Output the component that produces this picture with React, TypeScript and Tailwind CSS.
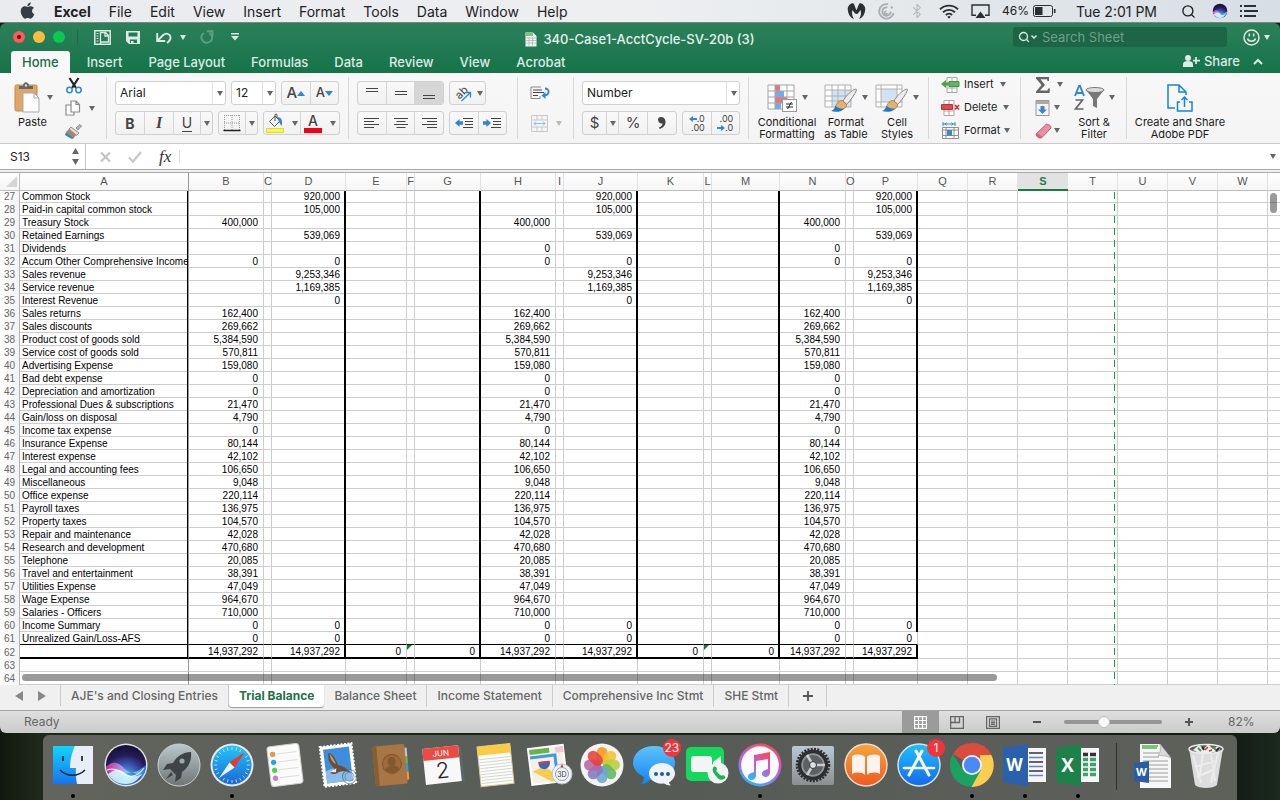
import React, { useState } from 'react';
import { Bluetooth, Search } from 'lucide-react';

type Row = {
  n: number;
  name?: string;
  debit?: string;
  credit?: string;
  // adjusted columns show a zero even where the first column is blank
  adjusted?: string;
};

const rows: Row[] = [
  { n: 27, name: 'Common Stock', credit: '920,000' },
  { n: 28, name: 'Paid-in capital common stock', credit: '105,000' },
  { n: 29, name: 'Treasury Stock', debit: '400,000' },
  { n: 30, name: 'Retained Earnings', credit: '539,069' },
  { n: 31, name: 'Dividends', adjusted: '0' },
  { n: 32, name: 'Accum Other Comprehensive Income', debit: '0', credit: '0' },
  { n: 33, name: 'Sales revenue', credit: '9,253,346' },
  { n: 34, name: 'Service revenue', credit: '1,169,385' },
  { n: 35, name: 'Interest Revenue', credit: '0' },
  { n: 36, name: 'Sales returns', debit: '162,400' },
  { n: 37, name: 'Sales discounts', debit: '269,662' },
  { n: 38, name: 'Product cost of goods sold', debit: '5,384,590' },
  { n: 39, name: 'Service cost of goods sold', debit: '570,811' },
  { n: 40, name: 'Advertising Expense', debit: '159,080' },
  { n: 41, name: 'Bad debt expense', debit: '0' },
  { n: 42, name: 'Depreciation and amortization', debit: '0' },
  { n: 43, name: 'Professional Dues & subscriptions', debit: '21,470' },
  { n: 44, name: 'Gain/loss on disposal', debit: '4,790' },
  { n: 45, name: 'Income tax expense', debit: '0' },
  { n: 46, name: 'Insurance Expense', debit: '80,144' },
  { n: 47, name: 'Interest expense', debit: '42,102' },
  { n: 48, name: 'Legal and accounting fees', debit: '106,650' },
  { n: 49, name: 'Miscellaneous', debit: '9,048' },
  { n: 50, name: 'Office expense', debit: '220,114' },
  { n: 51, name: 'Payroll taxes', debit: '136,975' },
  { n: 52, name: 'Property taxes', debit: '104,570' },
  { n: 53, name: 'Repair and maintenance', debit: '42,028' },
  { n: 54, name: 'Research and development', debit: '470,680' },
  { n: 55, name: 'Telephone', debit: '20,085' },
  { n: 56, name: 'Travel and entertainment', debit: '38,391' },
  { n: 57, name: 'Utilities Expense', debit: '47,049' },
  { n: 58, name: 'Wage Expense', debit: '964,670' },
  { n: 59, name: 'Salaries - Officers', debit: '710,000' },
  { n: 60, name: 'Income Summary', debit: '0', credit: '0' },
  { n: 61, name: 'Unrealized Gain/Loss-AFS', debit: '0', credit: '0' },
  { n: 62, debit: '14,937,292', credit: '14,937,292' },
  { n: 63 },
  { n: 64 },
];

const columns = [
  { id: 'A', width: 'w-[169px]' },
  { id: 'B', width: 'w-[75px]' },
  { id: 'C', width: 'w-[8px]' },
  { id: 'D', width: 'w-[74px]' },
  { id: 'E', width: 'w-[61px]' },
  { id: 'F', width: 'w-[8px]' },
  { id: 'G', width: 'w-[66px]' },
  { id: 'H', width: 'w-[75px]' },
  { id: 'I', width: 'w-[8px]' },
  { id: 'J', width: 'w-[74px]' },
  { id: 'K', width: 'w-[66px]' },
  { id: 'L', width: 'w-[8px]' },
  { id: 'M', width: 'w-[68px]' },
  { id: 'N', width: 'w-[66px]' },
  { id: 'O', width: 'w-[8px]' },
  { id: 'P', width: 'w-[64px]' },
  { id: 'Q', width: 'w-[50px]' },
  { id: 'R', width: 'w-[50px]' },
  { id: 'S', width: 'w-[50px]' },
  { id: 'T', width: 'w-[50px]' },
  { id: 'U', width: 'w-[50px]' },
  { id: 'V', width: 'w-[50px]' },
  { id: 'W', width: 'w-[50px]' },
];

const cellValue = (row: Row, col: string) => {
  switch (col) {
    case 'A':
      return row.name;
    case 'B':
      return row.debit;
    case 'H':
    case 'N':
      return row.adjusted ?? row.debit;
    case 'D':
    case 'J':
    case 'P':
      return row.credit;
    case 'E':
    case 'G':
    case 'K':
    case 'M':
      return row.n === 62 ? '0' : undefined;
    default:
      return undefined;
  }
};

// black rules are drawn over the grid line below so that they run unbroken
const rightBorder = (row: Row, col: string) => {
  if (col === 'A') {
    const rule = "after:absolute after:-bottom-px after:right-0 after:top-0 after:w-px after:bg-black after:content-['']";
    return `border-r border-r-[#999] ${row.n <= 62 ? rule : ''}`;
  }
  const thick = ['D', 'G', 'J', 'M', 'P'].includes(col) && row.n <= 62;
  if (thick && !(col === 'P' && row.n === 61)) {
    return "pr-1.5 after:absolute after:-bottom-px after:right-0 after:top-0 after:w-0.5 after:bg-black after:content-['']";
  }
  return 'border-r border-r-[#cdcdcd] pr-[5px]';
};

const bottomBorder = (row: Row, index: number) => {
  if (index <= 15 && row.n === 61) return 'border-b border-b-black';
  if (index <= 15 && row.n === 62) return 'border-b-2 border-b-black';
  return 'border-b border-b-[#cdcdcd]';
};

const Caret = ({ className = 'text-[#666]' }: { className?: string }) => (
  <svg width="6" height="5" viewBox="0 0 6 5" className={`shrink-0 ${className}`}>
    <path d="M0 0h6L3 5z" fill="currentColor" />
  </svg>
);

const Separator = () => <div className="my-1 w-px shrink-0 bg-[#d8d8d8]" />;

/* ---------- menu bar ---------- */

const menus = ['File', 'Edit', 'View', 'Insert', 'Format', 'Tools', 'Data', 'Window', 'Help'];

const SiriOrb = ({ size, id }: { size: number; id: string }) => (
  <svg width={size} height={size} viewBox="0 0 44 44">
    <defs>
      <radialGradient id={`${id}-bg`} cx="50%" cy="80%" r="80%">
        <stop offset="0" stopColor="#4ad0e8" />
        <stop offset=".35" stopColor="#4060c0" />
        <stop offset=".7" stopColor="#241a55" />
        <stop offset="1" stopColor="#160f35" />
      </radialGradient>
      <linearGradient id={`${id}-wave`} x1="0" x2="1">
        <stop offset="0" stopColor="#f02f9b" />
        <stop offset=".4" stopColor="#c9a0f5" />
        <stop offset=".7" stopColor="#7ee9fa" />
        <stop offset="1" stopColor="#2d7cf0" />
      </linearGradient>
    </defs>
    <circle cx="22" cy="22" r="21.500" fill="#dfe3e6" />
    <circle cx="22" cy="22" r="20" fill={`url(#${id}-bg)`} />
    <path d="M2 24c7-7 13-5 19 2s14 2 21-4c0 6-2 10-4 12-8-5-12-6-18-2S6 34 3 28z" fill={`url(#${id}-wave)`} opacity=".8" />
    <path d="M4 31c7-5 11-6 17-1s12 3 17 1c-4 6-9 10-16 10S8 38 4 31z" fill="#d9fbff" opacity=".85" />
    <path d="M3 27c8-3 14 2 19 5s12 1 18-7" fill="none" stroke="#fff" strokeWidth="1.200" opacity=".8" />
  </svg>
);

const MenuBar = () => (
  <header className="flex h-[22px] items-center justify-between bg-gradient-to-r from-[#e9ebee] via-[#edeff1] to-[#d8dfe4] pl-5 pr-[22px] text-[14px] text-[#222]">
    <nav className="flex items-center gap-[18px]">
      <svg width="15" height="17" viewBox="0 0 384 470" className="mb-0.5 mr-px" fill="#363c44">
        <path d="M319 249c0-37 17-65 50-86-19-27-47-42-85-44-36-3-75 21-89 21-15 0-49-20-76-20C63 121 4 165 4 253c0 27 5 54 14 82 13 37 59 127 107 125 25-1 43-18 76-18 32 0 48 18 76 18 49-1 91-82 103-119-65-31-61-90-61-92zM256 85c27-32 25-61 24-72-24 1-52 16-68 35-17 20-28 44-25 71 26 2 50-11 69-34z" />
      </svg>
      <a href="#" className="font-bold">
        Excel
      </a>
      {menus.map((m) => (
        <a key={m} href="#">
          {m}
        </a>
      ))}
    </nav>
    <div className="flex items-center">
      <svg width="19" height="16" viewBox="0 0 19 16" fill="#2b2e33">
        <path d="M1 8C0 4 2 1 6 0c2 2 2.500 6 3.500 7C10.500 6 11 2 13 0c4 1 6 4 5 8-.5 4-3 7-6 8 2-3 2.500-6 1.500-9-1.500 2-2.500 4-4 4s-2.500-2-4-4c-1 3-.5 6 1.500 9C4 15 1.500 12 1 8z" />
      </svg>
      <svg width="17" height="17" viewBox="0 0 17 17" className="ml-3" fill="none" stroke="#a9adb2" strokeWidth="1.800">
        <path d="M10 1.200A7.300 7.300 0 1 0 15.600 10" />
        <path d="M9.500 4.500A4.200 4.200 0 1 0 12.700 8.500" />
        <path d="M8.500 8.500a1.500 1.500 0 1 0 1 1.500M13 3.500a7 7 0 0 1 1.500 2" />
      </svg>
      <Bluetooth className="ml-3.5 h-4 w-4 text-[#b4b8bd]" strokeWidth={1.6} />
      <svg width="20" height="15" viewBox="0 0 20 15" className="ml-3.5" fill="none" stroke="#2b2e33" strokeWidth="1.900">
        <path d="M1 5.200a13 13 0 0 1 18 0M4 8.300a8.600 8.600 0 0 1 12 0M6.800 11a4.600 4.600 0 0 1 6.400 0" />
        <path d="M8.300 12.800L10 14.700l1.700-1.900a2.600 2.600 0 0 0-3.400 0z" fill="#2b2e33" stroke="none" />
      </svg>
      <svg width="19" height="15" viewBox="0 0 19 15" className="ml-3" fill="none" stroke="#2b2e33" strokeWidth="1.400">
        <path d="M5 11.300H1V1h17v10.300h-4" />
        <path d="M9.500 7.500l5 6.500h-10z" fill="#2b2e33" stroke="none" />
      </svg>
      <span className="ml-3 text-[12px]">46%</span>
      <svg width="23" height="12" viewBox="0 0 23 12" className="ml-1" fill="none" stroke="#2b2e33">
        <rect x=".5" y=".5" width="19" height="11" rx="2" />
        <rect x="2" y="2" width="7.500" height="8" fill="#2b2e33" stroke="none" />
        <path d="M21.700 4v4" strokeWidth="1.600" />
      </svg>
      <span className="ml-5">Tue 2:01 PM</span>
      <Search className="ml-6 h-[15px] w-[15px]" strokeWidth={2.2} />
      <div className="ml-4">
        <SiriOrb size={16} id="orb-small" />
      </div>
      <svg width="18" height="12" viewBox="0 0 18 12" className="ml-3" fill="#2b2e33">
        <path d="M0 0h2v2H0zM4 0h12v2H4zM0 5h2v2H0zM4 5h14v2H4zM0 10h2v2H0zM4 10h12v2H4z" />
      </svg>
    </div>
  </header>
);

/* ---------- title bar and ribbon tabs ---------- */

const ribbonTabs = ['Insert', 'Page Layout', 'Formulas', 'Data', 'Review', 'View', 'Acrobat'];

const TitleBar = () => (
  <div className="rounded-t-md bg-gradient-to-b from-[#2b805a] to-[#15734a]">
    <div className="grid h-7 grid-cols-[1fr_auto_1fr] items-center">
      <div className="flex items-center pl-[13px] text-[#dcebe3]">
        <div className="flex gap-2">
          <button aria-label="Close" className="flex h-3 w-3 items-center justify-center rounded-full bg-[#fc5b57]">
            <span className="h-1 w-1 rounded-full bg-[#5e0905]" />
          </button>
          <button aria-label="Minimize" className="h-3 w-3 rounded-full bg-[#fdbc40]" />
          <button aria-label="Zoom" className="h-3 w-3 rounded-full bg-[#0bc84f]" />
        </div>
        <span className="ml-3 h-4 w-px bg-[#22694a]" />
        <button aria-label="File templates" className="ml-4">
          <svg width="17" height="15" viewBox="0 0 17 15" fill="none" stroke="currentColor" strokeWidth="1.500">
            <path d="M.8.8h15.400v13.400H.8z" />
            <path d="M2.500 3.500h2M2.500 6h2M2.500 8.500h2M2.500 11h2" strokeWidth="1" />
            <path d="M6.500 14V2.500h5l3 3V12h-8M11 2.500v3.500h3.500" strokeWidth="1.300" />
          </svg>
        </button>
        <button aria-label="Save" className="ml-[15px]">
          <svg width="15" height="15" viewBox="0 0 15 15">
            <path d="M0 1h14v13H3l-3-3z" fill="currentColor" />
            <path d="M2.500 2.500h9v4h-9zM4 9.500h7V13H4z" fill="#247c55" />
            <path d="M5 11h2.500v3H5z" fill="currentColor" />
          </svg>
        </button>
        <button aria-label="Undo" className="ml-[15px] flex items-center gap-2">
          <svg width="16" height="13" viewBox="0 0 16 13" fill="none" stroke="currentColor" strokeWidth="1.900">
            <path d="M1.200 2v8h8" />
            <path d="M1.500 9.700L7 4.300c3-3 7-1.500 7.500 1.700.3 2.500-1.500 4.500-3.500 6" />
          </svg>
          <Caret className="text-[#dcebe3]" />
        </button>
        <button aria-label="Redo" className="ml-3.5">
          <svg width="14" height="14" viewBox="0 0 14 14" fill="none" stroke="#5e9f81" strokeWidth="1.900">
            <path d="M7 1.200h5.500v5" />
            <path d="M3.800 3A5.300 5.300 0 1 0 12 6.500L9.500 2.500" />
          </svg>
        </button>
        <button aria-label="Customize toolbar" className="ml-[17px]">
          <svg width="8" height="8" viewBox="0 0 8 8" fill="currentColor">
            <path d="M0 0h8v1.500H0zM0 3h8L4 7.500z" />
          </svg>
        </button>
      </div>
      <h1 className="flex items-center gap-1.5 pt-1 text-[13px] font-medium leading-5 text-[#e6f1eb]">
        <svg width="12" height="15" viewBox="0 0 12 15">
          <path d="M.5.5H8l3.500 3.500v10.500H.5z" fill="#f4f6f4" />
          <path d="M1 1h7v3H1z" fill="#7dbf84" />
          <path d="M1 6h10M1 8.500h10M1 11h10M4 5v9M7.500 5v9" stroke="#9db5a4" strokeWidth=".7" />
        </svg>
        340-Case1-AcctCycle-SV-20b (3)
      </h1>
      <div className="flex items-center justify-end pr-2.5 text-[#dcebe3]">
        <label className="flex h-5 w-[214px] items-center gap-px rounded-[3px] bg-[#1c6547] pl-[5px]">
          <Search className="h-3 w-3 shrink-0" strokeWidth={2.6} />
          <svg width="6" height="4" viewBox="0 0 6 4" fill="none" stroke="currentColor" strokeWidth="1.500">
            <path d="M.5.5L3 3 5.500.5" />
          </svg>
          <input
            type="text"
            aria-label="Search Sheet"
            placeholder="Search Sheet"
            className="ml-1 min-w-0 flex-1 bg-transparent text-[13px] leading-4 outline-none placeholder:text-[#6f9f89]"
          />
        </label>
        <button aria-label="Feedback" className="ml-4 flex items-center gap-1">
          <svg width="17" height="17" viewBox="0 0 17 17" fill="none" stroke="currentColor" strokeWidth="1.500">
            <circle cx="8.500" cy="8.500" r="7.500" />
            <path d="M4.500 9.500c1 3.500 7 3.500 8 0M6.300 4.500v3M10.700 4.500v3" />
          </svg>
          <Caret className="text-[#dcebe3]" />
        </button>
      </div>
    </div>
    <div className="flex h-[22px] items-stretch justify-between">
      <nav className="flex pl-[11px] text-[13px] font-medium leading-5">
        <button className="mr-1 rounded-t-[3px] bg-[#f8f8f8] px-[11px] text-[#1b6e49]">Home</button>
        {ribbonTabs.map((t) => (
          <button key={t} className="px-[13px] text-[#dcebe3]">
            {t}
          </button>
        ))}
      </nav>
      <div className="flex items-center gap-[13px] pb-0.5 pr-[17px] text-[#dcebe3]">
        <button className="flex items-center gap-1 text-[13px] font-medium leading-5">
          <svg width="17" height="12" viewBox="0 0 17 12" fill="currentColor">
            <circle cx="5" cy="3" r="3" />
            <path d="M0 12V9c0-2 2-3 5-3s5 1 5 3v3zM12.200 2h1.700v2.700H17v1.700h-3.100V9h-1.700V6.400H10V4.700h2.200z" />
          </svg>
          Share
        </button>
        <button aria-label="Collapse ribbon">
          <svg width="10" height="7" viewBox="0 0 10 7" fill="none" stroke="currentColor" strokeWidth="2">
            <path d="M1 6l4-4 4 4" />
          </svg>
        </button>
      </div>
    </div>
  </div>
);

/* ---------- ribbon ---------- */

const Combo = ({ label, value, className }: { label: string; value: string; className: string }) => (
  <label className={`relative block h-6 ${className}`}>
    <select
      aria-label={label}
      defaultValue={value}
      className="block h-6 w-full appearance-none rounded-[3px] border border-[#cfcfcf] bg-white pl-1 text-[12px] leading-5 text-[#222]"
    >
      <option>{value}</option>
    </select>
    <span className="pointer-events-none absolute inset-y-0 right-0 my-px flex w-3.5 items-center justify-center border-l border-[#e3e3e3]">
      <Caret />
    </span>
  </label>
);

const Cluster = ({ children, className = '' }: { children: React.ReactNode; className?: string }) => (
  <div className={`flex h-6 divide-x divide-[#d4d4d4] overflow-hidden rounded-[3px] border border-[#d0d0d0] bg-gradient-to-b from-[#f9f9f9] to-[#f1f1f1] ${className}`}>
    {children}
  </div>
);

const Tool = ({ label, className = 'flex-1', children }: { label: string; className?: string; children: React.ReactNode }) => (
  <button aria-label={label} className={`flex items-center justify-center ${className}`}>
    {children}
  </button>
);

const Lines = ({ d }: { d: string }) => (
  <svg width="16" height="14" viewBox="0 0 16 14" stroke="#444" strokeWidth="1.200">
    <path d={d} />
  </svg>
);

const alignIcons = [
  { label: 'Align left', d: 'M0 2.500h15M0 5.500h10M0 8.500h15M0 11.500h10' },
  { label: 'Center', d: 'M1 2.500h14M3.500 5.500h9M1 8.500h14M3.500 11.500h9' },
  { label: 'Align right', d: 'M1 2.500h15M6 5.500h10M1 8.500h15M6 11.500h10' },
];

const Indent = ({ d }: { d: string }) => (
  <svg width="18" height="12" viewBox="0 0 18 12">
    <path d="M8 1.500h10M10 4.500h8M10 7.500h8M8 10.500h10" stroke="#444" strokeWidth="1.200" />
    <path d={d} fill="#2e86d6" />
  </svg>
);

const Brush = () => (
  <>
    <path d="M31.500 6c-4 1.500-9 6-12.500 12l3.500 3.500C27 17 31 11 32.500 7c0-.7-.4-1-1-1z" fill="#ececec" stroke="#8a8a8a" />
    <path d="M18.500 17.500c-3.500 0-6 2.500-7 6.500 2 2.500 6 3 8.500 1.500 2-1 3-3 2.500-4.500z" fill="#e8b06b" stroke="#9a7238" strokeWidth=".8" />
    <path d="M11.500 23c-1 2.500-2 4-4.500 5 4 1.500 10 1 13-2-3-.3-6-1-8.500-3z" fill="#1f78d0" />
  </>
);

const BigTool = ({ lines, className, icon, caret = true }: { lines: string[]; className: string; icon: React.ReactNode; caret?: boolean }) => (
  <button className={`flex flex-col items-center pt-1.5 text-[11px] leading-3 text-[#1a1a1a] ${className}`}>
    <span className="flex h-[37px] items-center gap-1">
      {icon}
      {caret && <Caret />}
    </span>
    {lines.map((l) => (
      <span key={l} className="whitespace-nowrap">
        {l}
      </span>
    ))}
  </button>
);

const Ribbon = () => (
  <div className="flex h-[71px] border-b border-[#c9c9c9] bg-gradient-to-b from-[#f8f8f8] to-[#f4f4f4]">
    <div className="flex w-[106px] shrink-0 pl-[13px]">
      <button className="flex w-[42px] flex-col items-start pt-1.5 text-[11px] leading-3 text-[#1a1a1a]">
        <span className="flex h-[37px] items-center gap-1.5">
          <svg width="28" height="32" viewBox="0 0 28 32" className="shrink-0">
            <rect x="2" y="3" width="22" height="26" rx="1.500" fill="#dfa767" stroke="#bd8a4d" />
            <path d="M6 7V4h4c0-5 6-5 6 0h4v3z" fill="#666" />
            <circle cx="13" cy="3.500" r="1.200" fill="#ddd" />
            <path d="M10 11h11l5 5v14H10z" fill="#fdfdfd" stroke="#a9a9a9" />
            <path d="M21 11v5h5" fill="none" stroke="#a9a9a9" />
          </svg>
          <Caret />
        </span>
        <span className="pl-[5px]">Paste</span>
      </button>
      <div className="ml-2.5 flex flex-col">
        <Tool label="Cut" className="h-6 w-[17px]">
          <svg width="16" height="17" viewBox="0 0 16 17" fill="none">
            <path d="M3.500 1L10 11M12.500 1L6 11" stroke="#222" strokeWidth="2.200" />
            <circle cx="3.500" cy="13" r="2.700" stroke="#2e86d6" strokeWidth="1.500" />
            <circle cx="12.500" cy="13" r="2.700" stroke="#2e86d6" strokeWidth="1.500" />
          </svg>
        </Tool>
        <button aria-label="Copy" className="flex h-[22px] items-center gap-2">
          <svg width="16" height="16" viewBox="0 0 16 16" fill="#fff" stroke="#8c8c8c" strokeWidth="1.200">
            <path d="M1 5h5l3 3v7H1z" />
            <path d="M6 1h5l3.500 3.500V12H6zM11 1v3.500h3.500" />
          </svg>
          <Caret />
        </button>
        <Tool label="Format painter" className="h-6 w-[17px]">
          <svg width="17" height="15" viewBox="0 0 17 15">
            <path d="M11 4l4-3.500 1.500 1.500L13 6z" fill="#bbb" stroke="#777" strokeWidth=".8" />
            <path d="M6 3l8 6-2.500 2.500L4 5z" fill="#ddd" stroke="#777" strokeWidth=".8" />
            <path d="M4 5l7 6-3 4L1 8z" fill="#a8866a" />
            <path d="M1 8l7 6-1 1-7-4z" fill="#2d7fd0" />
          </svg>
        </Tool>
      </div>
    </div>
    <Separator />

    <div className="flex shrink-0 flex-col gap-1.5 px-2 pt-2">
      <div className="flex gap-[5px]">
        <Combo label="Font" value="Arial" className="w-[111px]" />
        <Combo label="Font size" value="12" className="w-[45px]" />
        <Cluster className="w-[58px]">
          <Tool label="Increase font size">
            <span className="text-[15px] font-medium text-[#444]">A</span>
            <svg width="8" height="5" viewBox="0 0 8 5">
              <path d="M0 5h8L4 0z" fill="#2e86d6" />
            </svg>
          </Tool>
          <Tool label="Decrease font size">
            <span className="text-[13px] font-medium text-[#444]">A</span>
            <svg width="8" height="5" viewBox="0 0 8 5">
              <path d="M0 0h8L4 5z" fill="#2e86d6" />
            </svg>
          </Tool>
        </Cluster>
      </div>
      <div className="flex gap-[5px] text-[14px] text-[#444]">
        <Cluster className="w-[98px]">
          <Tool label="Bold" className="w-[29px]">
            <b>B</b>
          </Tool>
          <Tool label="Italic" className="w-[29px]">
            <i className="font-['Liberation_Serif',serif] text-[16px] font-bold">I</i>
          </Tool>
          <Tool label="Underline" className="w-[27px]">
            <span className="border-b border-[#444] leading-4">U</span>
          </Tool>
          <Tool label="Underline style">
            <Caret />
          </Tool>
        </Cluster>
        <Cluster className="w-10">
          <Tool label="Borders" className="w-[27px]">
            <svg width="18" height="18" viewBox="0 0 18 18" stroke="#999" strokeDasharray="1 1" fill="none">
              <path d="M1 1.500h16M1.500 1v15M9 1v15M16.500 1v15M1 9h16" />
              <path d="M.5 16.500h17" stroke="#222" strokeDasharray="none" strokeWidth="1.500" />
            </svg>
          </Tool>
          <Tool label="Border style">
            <Caret />
          </Tool>
        </Cluster>
        <Cluster className="w-[77px]">
          <Tool label="Fill color" className="w-[37px] gap-2">
            <svg width="18" height="20" viewBox="0 0 18 20">
              <path d="M3.500 8.500l5.500-5.500 5 5-5.500 5.500z" fill="#f4f4f4" stroke="#555" />
              <path d="M9 8V2c0-1.500 2-1.500 2 0v3" fill="none" stroke="#555" />
              <path d="M11.500 4c4 0 5.500 4 4 9l-2.500-4z" fill="#2e86d6" />
              <rect x=".5" y="15.500" width="17" height="4" fill="#fbf64a" stroke="#ded93e" />
            </svg>
            <Caret />
          </Tool>
          <Tool label="Font color" className="flex-1 gap-2">
            <span className="flex w-[18px] flex-col items-center">
              <span className="text-[14px] font-medium leading-[14px]">A</span>
              <span className="h-[5px] w-full bg-[#f30014]" />
            </span>
            <Caret />
          </Tool>
        </Cluster>
      </div>
    </div>
    <Separator />

    <div className="flex shrink-0 flex-col gap-1.5 pl-2 pr-2.5 pt-2">
      <div className="flex gap-[5px]">
        <Cluster className="w-[87px]">
          <Tool label="Top align">
            <Lines d="M2 2.500h12M2 5.500h12" />
          </Tool>
          <Tool label="Middle align">
            <Lines d="M2 5.500h12M2 8.500h12" />
          </Tool>
          <Tool label="Bottom align" className="flex-1 bg-[#d6d6d6]">
            <Lines d="M2 9.500h12M2 12.500h12" />
          </Tool>
        </Cluster>
        <Cluster className="w-[37px]">
          <Tool label="Orientation" className="flex-1 gap-1">
            <svg width="20" height="19" viewBox="0 0 20 19" className="shrink-0 overflow-visible">
              <text x="3" y="13" fontSize="11" fill="#444" transform="rotate(-45 8 10)">
                ab
              </text>
              <path d="M8.500 17l8.500-8M12.500 8.500h5v5" fill="none" stroke="#2e86d6" strokeWidth="1.300" />
            </svg>
            <Caret />
          </Tool>
        </Cluster>
      </div>
      <div className="flex gap-[5px]">
        <Cluster className="w-[87px]">
          {alignIcons.map((a) => (
            <Tool key={a.label} label={a.label}>
              <Lines d={a.d} />
            </Tool>
          ))}
        </Cluster>
        <Cluster className="w-[58px]">
          <Tool label="Decrease indent">
            <Indent d="M0 6l4.500-4v2.300H8v3.400H4.500V10z" />
          </Tool>
          <Tool label="Increase indent">
            <Indent d="M8 6L3.500 2v2.300H0v3.400h3.500V10z" />
          </Tool>
        </Cluster>
      </div>
    </div>
    <Separator />

    <div className="flex w-[55px] shrink-0 flex-col gap-1.5 pl-3 pt-2">
      <Tool label="Wrap text" className="h-6 w-5">
        <svg width="20" height="14" viewBox="0 0 20 14" fill="none">
          <path d="M11 1H1v11.500h9V10" stroke="#888" />
          <path d="M3 4h9M3 6.500h11M3 9.500h5" stroke="#444" />
          <path d="M15 2.500c5 0 5 6.500-1 7" stroke="#2e86d6" strokeWidth="1.800" />
          <path d="M11.500 9.500l4-3.500v7z" fill="#2e86d6" />
        </svg>
      </Tool>
      <button aria-label="Merge cells" className="flex h-6 items-center gap-2 pl-px">
        <svg width="17" height="17" viewBox="0 0 17 17" fill="none" stroke="#c9c9c9">
          <path d="M.5.500h16v16H.5zM.5 5h16M.5 12h16M6 .5V5M11 .5V5M6 12v4.500M11 12v4.500" />
          <path d="M3 8.500h11M5 6.500l-2 2 2 2M12 6.500l2 2-2 2" stroke="#8dbde8" />
        </svg>
        <Caret className="text-[#bbb]" />
      </button>
    </div>
    <Separator />

    <div className="flex shrink-0 flex-col gap-1.5 px-2 pt-2">
      <Combo label="Number format" value="Number" className="w-[158px]" />
      <div className="flex gap-[5px] text-[#444]">
        <Cluster className="w-[95px] text-[15px]">
          <Tool label="Currency" className="w-6">
            $
          </Tool>
          <Tool label="Currency style" className="w-3">
            <Caret />
          </Tool>
          <Tool label="Percent">%</Tool>
          <Tool label="Comma style">
            <svg width="8" height="12" viewBox="0 0 8 12">
              <path d="M0 2.500C0 .8 1.500 0 3 0c3 0 4.500 2 4.500 5 0 3.500-2.500 6-6 7l-.5-1.500C3.500 9.500 4.500 8 4.500 6.500 2 7 0 5 0 2.500z" fill="#444" />
            </svg>
          </Tool>
        </Cluster>
        <Cluster className="w-[58px] text-[9px] leading-[9px]">
          <Tool label="Increase decimal">
            <span className="flex flex-col items-end">
              <span className="flex items-center">
                <svg width="8" height="6" viewBox="0 0 8 6">
                  <path d="M0 3l4-3v2h4v2H4v2z" fill="#2e86d6" />
                </svg>
                .0
              </span>
              <span>.00</span>
            </span>
          </Tool>
          <Tool label="Decrease decimal">
            <span className="flex flex-col items-end">
              <span>.00</span>
              <span className="flex items-center">
                <svg width="8" height="6" viewBox="0 0 8 6">
                  <path d="M8 3L4 0v2H0v2h4v2z" fill="#2e86d6" />
                </svg>
                .0
              </span>
            </span>
          </Tool>
        </Cluster>
      </div>
    </div>
    <Separator />

    <div className="flex w-[179px] shrink-0 gap-1 pl-2">
      <BigTool
        lines={['Conditional', 'Formatting']}
        className="w-[60px]"
        icon={
          <svg width="31" height="28" viewBox="0 0 31 28" fill="none">
            <path d="M1 1h26v24H1z" fill="#fff" />
            <path d="M8 1h5v6H8zM8 13h12v6H8z" fill="#ec7474" />
            <path d="M8 7h9v6H8zM8 19h6v6H8z" fill="#6aaeea" />
            <path d="M1 1h26v24H1zM1 7h26M1 13h26M1 19h26M8 1v24M20 1v24" stroke="#a5a5a5" />
            <rect x="15.500" y="15.500" width="14" height="12" fill="#fff" stroke="#999" />
            <path d="M19 20h7M19 23h7M24.500 18l-4 7" stroke="#222" />
          </svg>
        }
      />
      <BigTool
        lines={['Format', 'as Table']}
        className="w-[50px]"
        icon={
          <svg width="34" height="30" viewBox="0 0 34 30" fill="none">
            <path d="M1 2h26v22H1z" fill="#fff" />
            <path d="M8 7h19v17H8z" fill="#cfe3f3" />
            <path d="M1 2h26v22H1zM1 7h26M1 13h26M1 18h26M8 2v22M14 2v22M21 2v22" stroke="#b0b0b0" />
            <Brush />
          </svg>
        }
      />
      <BigTool
        lines={['Cell', 'Styles']}
        className="w-[44px]"
        icon={
          <svg width="34" height="30" viewBox="0 0 34 30" fill="none">
            <path d="M1 2h26v22H1z" fill="#fff" />
            <path d="M6 6h16v13H6z" fill="#cfe3f3" />
            <path d="M1 2h26v22H1zM1 6h26M1 19h26M6 2v22M22 2v22" stroke="#b0b0b0" />
            <Brush />
          </svg>
        }
      />
    </div>
    <Separator />

    <div className="flex w-[91px] shrink-0 flex-col items-start pl-3 text-[11px] text-[#1a1a1a]">
      <button className="flex h-[23px] items-center gap-1">
        <svg width="19" height="16" viewBox="0 0 19 16" fill="none">
          <path d="M6 .5h10v15H6zM11 .5v15M6 11h10" fill="#fff" stroke="#a9a9a9" />
          <path d="M8 4.500h10v5H8z" fill="#63b567" stroke="#3f9445" />
          <path d="M0 7l5-4v2.500h3v3H5V11z" fill="#46a34c" />
        </svg>
        Insert
        <span className="ml-0.5">
          <Caret />
        </span>
      </button>
      <button className="flex h-[23px] items-center gap-1">
        <svg width="19" height="16" viewBox="0 0 19 16" fill="none">
          <path d="M3 .5h10v15H3zM8 .5v15M3 11h10" fill="#fff" stroke="#a9a9a9" />
          <path d="M.5 4.500h11v5H.5z" fill="#df4a4f" stroke="#b8343a" />
          <path d="M14 5l4 4.500M18 5l-4 4.500" stroke="#d02f36" strokeWidth="1.600" />
        </svg>
        Delete
        <span className="ml-0.5">
          <Caret />
        </span>
      </button>
      <button className="flex h-[23px] items-center gap-1">
        <svg width="19" height="17" viewBox="0 0 19 17" fill="none">
          <path d="M2 2h12M2 0v4M14 0v4M5.500.5L4 2l1.500 1.500M10.500.5L12 2l-1.500 1.500" stroke="#2e86d6" />
          <path d="M1.500 5.500h16v11h-16zM1.500 8h16M1.500 13.500h16M5 5.500v11M13 5.500v11" fill="#fff" stroke="#8d8d8d" />
          <path d="M6 8h5v5.500H6z" fill="#3c87cb" />
        </svg>
        Format
        <Caret />
      </button>
    </div>
    <Separator />

    <div className="flex w-[105px] shrink-0 pl-3.5">
      <div className="flex w-[34px] flex-col">
        <button aria-label="AutoSum" className="flex h-[23px] items-center gap-1.5">
          <svg width="16" height="16" viewBox="0 0 16 16">
            <path d="M1 0h13v4h-1.500l-.5-1.800H5.500L10 8l-5 5.500h7.500l.7-2H15L14.500 16H1v-1.500L6.500 8 1 1.500z" fill="#666" />
          </svg>
          <Caret />
        </button>
        <button aria-label="Fill" className="flex h-[23px] items-center gap-1">
          <svg width="15" height="16" viewBox="0 0 15 16">
            <path d="M1 .5h13v15H1z" fill="#f5f5f5" stroke="#999" />
            <path d="M1 1h13v3H1z" fill="#aaa" />
            <path d="M5.500 6h4v3.500H12L7.500 14 3 9.500h2.500z" fill="#3c87cb" />
          </svg>
          <Caret />
        </button>
        <button aria-label="Clear" className="flex h-[23px] items-center gap-0.5">
          <svg width="17" height="16" viewBox="0 0 17 16">
            <path d="M1 11L11 1.500c2-1 5 1 5 3.500L7 14.500C5 16 1 14 1 11z" fill="#ec8da0" stroke="#b56476" />
            <path d="M1 10.500c1.500-.5 5.500 1.500 6 4-2 1.500-6-.5-6-4z" fill="#d9607a" />
          </svg>
          <Caret />
        </button>
      </div>
      <BigTool
        lines={['Sort &', 'Filter']}
        className="w-[50px]"
        icon={
          <svg width="32" height="28" viewBox="0 0 32 28" fill="none">
            <path d="M2 12L6 2h1l4 10M3.500 9h6" stroke="#2e86d6" strokeWidth="1.900" />
            <path d="M2.500 16h7l-7 9h8" stroke="#666" strokeWidth="1.700" />
            <path d="M13 6l7 9v7l4 2v-9l7-9z" fill="#777" />
            <ellipse cx="22" cy="6" rx="9" ry="2.500" fill="#dcdcdc" stroke="#777" />
          </svg>
        }
      />
    </div>
    <Separator />

    <BigTool
      lines={['Create and Share', 'Adobe PDF']}
      className="w-[106px] shrink-0"
      caret={false}
      icon={
        <svg width="26" height="30" viewBox="0 0 26 30" fill="none" stroke="#1583e0" strokeWidth="1.500">
          <path d="M8 25H1V2h11l7 7v3M12 2v7h7" />
          <path d="M13 19h-2.500v9H25v-9h-3M17.500 24V14M14.500 17l3-3 3 3" />
        </svg>
      }
    />
  </div>
);

const FormulaBar = () => (
  <div className="flex h-[29px] items-stretch border-b border-[#aaa] bg-[#f0f0f0] pb-0.5">
    <div className="flex flex-1 items-stretch border-b border-[#aaa] bg-white">
      <div className="flex w-[86px] items-center justify-between border-r border-[#c9c9c9] pl-2.5 pr-1.5">
        <input aria-label="Name box" defaultValue="S13" className="w-14 text-[12px] leading-4 text-[#222] outline-none" />
        <svg width="7" height="17" viewBox="0 0 7 17" fill="#666">
          <path d="M3.500 0L7 6H0zM3.500 17L7 11H0z" />
        </svg>
      </div>
      <button aria-label="Cancel" className="ml-3.5">
        <svg width="11" height="12" viewBox="0 0 11 12" stroke="#c4c4c4" strokeWidth="2.200">
          <path d="M1 1.500l9 9M10 1.500l-9 9" />
        </svg>
      </button>
      <button aria-label="Enter" className="ml-[17px]">
        <svg width="14" height="12" viewBox="0 0 14 12" fill="none" stroke="#c9c9c9" strokeWidth="2.400">
          <path d="M1 6.500l4 4L13 1" />
        </svg>
      </button>
      <button aria-label="Insert function" className="ml-[17px] font-['Liberation_Serif',serif] text-[17px] italic text-[#333]">
        fx
      </button>
      <span className="my-1.5 ml-2 w-px bg-[#ddd]" />
      <input aria-label="Formula" className="ml-2 min-w-0 flex-1 text-[12px] outline-none" />
      <button aria-label="Expand formula bar" className="pr-1">
        <Caret />
      </button>
    </div>
  </div>
);

/* ---------- worksheet ---------- */

const Sheet = () => (
  <div className="relative overflow-hidden bg-white">
    <table className="w-full table-fixed border-separate border-spacing-0 font-['Liberation_Sans',Arial,sans-serif] text-[10px] leading-[11px] text-black">
      <colgroup>
        <col className="w-5" />
        {columns.map((c) => (
          <col key={c.id} className={c.width} />
        ))}
        <col />
      </colgroup>
      <thead>
        <tr className="h-[18px] bg-gradient-to-b from-white to-[#f5f5f5] text-[11px] text-[#555]">
          <th className="border-b border-r border-[#bdbdbd] p-0">
            <svg width="11" height="11" viewBox="0 0 11 11" className="ml-1.5">
              <path d="M11 0v11H0z" fill="#d5d5d5" />
            </svg>
          </th>
          {columns.map((c) => (
            <th
              key={c.id}
              className={
                c.id === 'S'
                  ? 'border-b-2 border-b-[#1b7a4c] bg-[#e2e2e2] p-0 font-bold text-[#1b7a4c]'
                  : c.id === 'A'
                    ? 'border-b border-r border-b-[#bdbdbd] border-r-[#999] p-0 font-normal'
                    : 'border-b border-r border-b-[#bdbdbd] border-r-[#e2e2e2] p-0 font-normal'
              }
            >
              {c.id}
            </th>
          ))}
          <th className="border-b border-b-[#bdbdbd] p-0" />
        </tr>
      </thead>
      <tbody>
        {rows.map((row) => {
          // row 27 is partly scrolled under the header
          const top = row.n === 27 ? 'pt-0' : 'pt-px';
          return (
            <tr key={row.n} className={row.n === 27 ? 'h-3' : row.n === 62 ? 'h-3.5' : 'h-[13px]'}>
              <th className={`border-r border-r-[#b5b5b5] bg-gradient-to-r from-white to-[#f3f3f3] pb-px pl-0 pr-1 text-right font-normal text-[#666] ${top}`}>
                {row.n}
              </th>
              {columns.map((c, i) => {
                const value = cellValue(row, c.id);
                const flagged = row.n === 62 && (c.id === 'F' || c.id === 'L');
                if (c.id === 'A') {
                  return (
                    <td key={c.id} className={`relative pb-0 pl-0.5 pr-0 ${top} ${rightBorder(row, c.id)} ${bottomBorder(row, i)}`}>
                      <div className="h-[11px] overflow-hidden whitespace-nowrap">{value}</div>
                    </td>
                  );
                }
                return (
                  <td
                    key={c.id}
                    className={`relative whitespace-nowrap pb-0 pl-0 text-right ${top} ${rightBorder(row, c.id)} ${bottomBorder(row, i)}`}
                  >
                    {value}
                    {flagged && (
                      <svg width="5" height="5" viewBox="0 0 5 5" className="absolute left-0 top-0">
                        <path d="M0 0h5L0 5z" fill="#137c33" />
                      </svg>
                    )}
                  </td>
                );
              })}
              <td className="border-b border-b-[#cdcdcd] p-0" />
            </tr>
          );
        })}
      </tbody>
    </table>
    {/* print area page break */}
    <div className="absolute bottom-0 left-[1114px] top-[19px] w-px bg-[repeating-linear-gradient(to_bottom,#12a63f_0_7px,transparent_7px_12px)]" />
    <div className="absolute bottom-1 left-[22px] h-[7px] w-[975px] rounded-full bg-black/40" />
    <div className="absolute right-[3px] top-5 h-5 w-[7px] rounded-full bg-black/40" />
  </div>
);

const sheetTabs = [
  "AJE's and Closing Entries",
  'Trial Balance',
  'Balance Sheet',
  'Income Statement',
  'Comprehensive Inc Stmt',
  'SHE Stmt',
];

const SheetTabs = () => {
  const [active, setActive] = useState('Trial Balance');

  return (
    <div className="flex h-[26px] border-b border-[#a3a3a3] bg-[#f0f0f0] text-[12px] font-medium text-[#666]">
      <div className="mb-1 flex w-[61px] items-center gap-[15px] border-r border-[#ccc] pl-[15px]">
        <button aria-label="Previous sheet">
          <svg width="8" height="10" viewBox="0 0 8 10">
            <path d="M8 0v10L0 5z" fill="#888" />
          </svg>
        </button>
        <button aria-label="Next sheet">
          <svg width="8" height="10" viewBox="0 0 8 10">
            <path d="M0 0v10l8-5z" fill="#888" />
          </svg>
        </button>
      </div>
      {sheetTabs.map((t) => (
        <button
          key={t}
          onClick={() => setActive(t)}
          className={
            t === active
              ? 'mb-[3px] whitespace-nowrap rounded-b-[3px] bg-white px-2.5 font-bold text-[#217346] shadow-[0_1px_1px_#999]'
              : 'mb-[3px] whitespace-nowrap border-r border-[#ccc] px-2.5'
          }
        >
          {t}
        </button>
      ))}
      <button aria-label="Add sheet" className="mb-[3px] flex w-[38px] items-center justify-center border-r border-[#ccc]">
        <svg width="10" height="10" viewBox="0 0 10 10" stroke="#555" strokeWidth="1.800">
          <path d="M5 0v10M0 5h10" />
        </svg>
      </button>
    </div>
  );
};

const StatusBar = () => {
  const [zoom, setZoom] = useState(40);

  return (
    <div className="flex h-[22px] items-center justify-between rounded-b-md bg-gradient-to-b from-[#dfdfdf] to-[#cbcbcb] pl-6 text-[12px] text-[#666]">
      <span>Ready</span>
      <div className="flex h-full items-center">
        <button aria-label="Normal view" className="flex h-full w-[37px] items-center justify-center bg-[#9b9b9b]">
          <svg width="13" height="13" viewBox="0 0 13 13" fill="none" stroke="#fff" strokeWidth="1.200">
            <path d="M.6.6h11.800v11.800H.6zM4.500.6v11.800M8.500.6v11.800M.6 4.500h11.800M.6 8.500h11.800" />
          </svg>
        </button>
        <button aria-label="Page layout view" className="flex w-9 justify-center">
          <svg width="14" height="13" viewBox="0 0 14 13" fill="none" stroke="#666" strokeWidth="1.300">
            <path d="M.6.6h12.800v11.800H.6zM5 .6v5.900M9.500.6v5.900H.6" />
          </svg>
        </button>
        <button aria-label="Page break view" className="flex w-9 justify-center">
          <svg width="14" height="13" viewBox="0 0 14 13" fill="none" stroke="#666" strokeWidth="1.200">
            <path d="M.6.6h12.800v11.800H.6zM3.500 2.800h7v7.500h-7zM5 5h4M5 6.700h4M5 8.300h4" />
          </svg>
        </button>
        <button aria-label="Zoom out" className="ml-[21px]">
          <svg width="10" height="10" viewBox="0 0 10 10" stroke="#555" strokeWidth="2">
            <path d="M1 5h8" />
          </svg>
        </button>
        <input
          type="range"
          aria-label="Zoom"
          value={zoom}
          onChange={(e) => setZoom(Number(e.target.value))}
          className="ml-[22px] h-3 w-[98px] appearance-none bg-transparent [&::-webkit-slider-runnable-track]:h-1 [&::-webkit-slider-runnable-track]:rounded-full [&::-webkit-slider-runnable-track]:bg-[#959595] [&::-webkit-slider-thumb]:-mt-1 [&::-webkit-slider-thumb]:h-3 [&::-webkit-slider-thumb]:w-3 [&::-webkit-slider-thumb]:appearance-none [&::-webkit-slider-thumb]:rounded-full [&::-webkit-slider-thumb]:border [&::-webkit-slider-thumb]:border-[#bbb] [&::-webkit-slider-thumb]:bg-white"
        />
        <button aria-label="Zoom in" className="ml-[22px]">
          <svg width="10" height="10" viewBox="0 0 10 10" stroke="#555" strokeWidth="2">
            <path d="M1 5h8M5 1v8" />
          </svg>
        </button>
        <span className="ml-[34px] w-[52px]">82%</span>
      </div>
    </div>
  );
};

/* ---------- dock ---------- */

const Badge = ({ children }: { children: React.ReactNode }) => (
  <span className="absolute -right-1 -top-1 flex h-[18px] min-w-[18px] items-center justify-center rounded-full bg-[#f5333b] text-[12px] text-white">
    {children}
  </span>
);

const petals = ['#f7941e', '#f2c32e', '#b9cf3b', '#5fb95f', '#6ba5d8', '#8779b9', '#b565a7', '#e8413c'];
const ticks = [0, 15, 30, 45, 60, 75, 90, 105, 120, 135, 150, 165];

const dockApps: { name: string; running?: boolean; badge?: string; art: React.ReactNode }[] = [
  {
    name: 'Finder',
    running: true,
    art: (
      <>
        <defs>
          <linearGradient id="finder" x1="0" y1="0" x2="0" y2="1">
            <stop offset="0" stopColor="#10d5fd" />
            <stop offset="1" stopColor="#1a73ec" />
          </linearGradient>
        </defs>
        <path d="M2 3h40v38H2z" fill="#e7eef7" />
        <path d="M2 3h22c-3 6-5 13-5 22h6c-.5 5 0 11 1 16H2z" fill="url(#finder)" />
        <path d="M12 13v5M31 13v5" stroke="#123" strokeWidth="1.700" />
        <path d="M9 27c7 7 18 7 25 0" fill="none" stroke="#123" strokeWidth="1.500" />
      </>
    ),
  },
  { name: 'Siri', art: <SiriOrb size={44} id="orb-dock" /> },
  {
    name: 'Launchpad',
    art: (
      <>
        <defs>
          <linearGradient id="launchpad" x1="0" y1="0" x2="0" y2="1">
            <stop offset="0" stopColor="#bac9cc" />
            <stop offset="1" stopColor="#6f7474" />
          </linearGradient>
        </defs>
        <circle cx="22" cy="22" r="21" fill="url(#launchpad)" stroke="#c9d1d3" />
        <path d="M34 9c-8 0-14 4-18 11l-6 1-4 6 7-1 6 6-1 7 6-4 1-6c6-4 10-11 9-20z" fill="#3d4347" />
        <circle cx="25" cy="18" r="2.600" fill="#9ca8ab" />
        <path d="M14 29l-5 7 7-4z" fill="#3d4347" />
      </>
    ),
  },
  {
    name: 'Safari',
    running: true,
    art: (
      <>
        <defs>
          <linearGradient id="safari" x1="0" y1="0" x2="0" y2="1">
            <stop offset="0" stopColor="#23c5f7" />
            <stop offset="1" stopColor="#1a68d6" />
          </linearGradient>
        </defs>
        <circle cx="22" cy="22" r="21.500" fill="#e8ebed" />
        <circle cx="22" cy="22" r="19.500" fill="url(#safari)" />
        {ticks.map((a) => (
          <path key={a} d="M22 4v3M22 37v3" stroke="#cfeaff" strokeWidth=".8" transform={`rotate(${a} 22 22)`} />
        ))}
        <path d="M35 9L19.500 19.500l5 5z" fill="#f0352f" />
        <path d="M9 35l10.500-15.500 5 5z" fill="#f2f2f2" />
      </>
    ),
  },
  {
    name: 'Reminders',
    art: (
      <g transform="rotate(-7 22 22)">
        <rect x="6" y="2" width="32" height="40" rx="3" fill="#fbfbfb" stroke="#cfcfcf" />
        <path d="M15 10h20M15 18h20M15 26h20M15 34h20" stroke="#ddd" />
        <circle cx="11" cy="10" r="2.700" fill="#f79433" />
        <circle cx="11" cy="18" r="2.700" fill="#1ba6ea" />
        <circle cx="11" cy="26" r="2.700" fill="#57cf4a" />
        <circle cx="11" cy="34" r="2.700" fill="#c57ce0" />
      </g>
    ),
  },
  {
    name: 'Mail',
    art: (
      <g transform="rotate(-7 22 22)">
        <rect x="6" y="2" width="32" height="40" fill="#fff" stroke="#fff" strokeWidth="2" strokeDasharray="2 1.500" />
        <rect x="9" y="5" width="26" height="34" fill="#3f8edc" />
        <path d="M9 27c8-4 18-2 26 2v10H9z" fill="#8abdee" />
        <path d="M14 9c3 0 6 5 8 13 4 1 8 4 12 9-5-2-9-3-12-2-3 2-6 2-9 0 2-1 4-2 5-4-4-4-6-10-4-16z" fill="#6d4f35" />
        <path d="M15 10c2 2 4 6 5 11-3-2-5-6-5-11z" fill="#b99b7a" />
        <path d="M13 28l7-3-1 4z" fill="#eee" />
        <circle cx="32" cy="35" r="7" fill="none" stroke="#44576b" opacity=".6" />
        <circle cx="32" cy="35" r="4.500" fill="none" stroke="#44576b" opacity=".5" />
      </g>
    ),
  },
  {
    name: 'Contacts',
    art: (
      <g transform="rotate(-5 22 22)">
        <path d="M35 6h4v9h-4z" fill="#c8c8c8" />
        <path d="M35 15h4v7h-4z" fill="#5bc24f" />
        <path d="M35 22h4v8h-4z" fill="#2b9de8" />
        <path d="M35 30h4v8h-4z" fill="#f39b2d" />
        <rect x="5" y="2" width="32" height="40" rx="2" fill="#a87545" />
        <path d="M5 4c0-1 1-2 2-2h2v40H7c-1 0-2-1-2-2z" fill="#8c5c31" />
        <circle cx="23" cy="21" r="9.500" fill="#9c6a3b" stroke="#83582d" />
        <path d="M23 14c3 0 4 2 4 5 0 2-1 3-2 4 3 1 5 2 5 4-4 4-10 4-14 0 0-2 2-3 5-4-1-1-2-2-2-4 0-3 1-5 4-5z" fill="#83582d" />
      </g>
    ),
  },
  {
    name: 'Calendar',
    art: (
      <g transform="rotate(-6 22 22)">
        <path d="M7 6h35v34H7z" fill="#5d666b" />
        <rect x="3" y="4" width="36" height="36" fill="#f8f8f8" />
        <path d="M3 4h36v12H3z" fill="#ec4a44" />
        <text x="21" y="13" fontSize="8" textAnchor="middle" fill="#fff">
          JUN
        </text>
        <text x="21" y="35" fontSize="22" fontWeight="300" textAnchor="middle" fill="#222">
          2
        </text>
      </g>
    ),
  },
  {
    name: 'Notes',
    art: (
      <g transform="rotate(-6 22 22)">
        <rect x="5" y="2" width="33" height="40" fill="#fcfcf8" stroke="#d6c9a0" />
        <path d="M5 2h33v9H5z" fill="#fbcb45" />
        <path d="M6 15h31M6 18h31M6 21h31M6 24h31M6 27h31M6 30h31M6 33h31M6 36h31M6 39h31" stroke="#d5d5d5" />
      </g>
    ),
  },
  {
    name: 'Maps',
    art: (
      <>
        <g transform="rotate(-7 20 22)">
          <rect x="3" y="4" width="35" height="36" fill="#f5f1e6" stroke="#fff" strokeWidth="2" />
          <path d="M4 5h20v5H4z" fill="#67b548" />
          <path d="M30 5h8v6h-8z" fill="#f3c6d4" />
          <path d="M4 13h25v16" fill="none" stroke="#3f9be3" strokeWidth="3" />
          <path d="M5 27l12-4 14 12v4H23z" fill="#f7cd4d" />
          <path d="M12 18h11c1 5-2 7-5.500 8-4-1-6.500-3-5.500-8z" fill="#3268c4" />
          <path d="M12 18h11v2H12z" fill="#d93b34" />
        </g>
        <circle cx="35" cy="31" r="10" fill="#f1f4f7" stroke="#b8c2cc" />
        <circle cx="35" cy="31" r="6.500" fill="none" stroke="#768aa0" strokeWidth=".8" />
        <path d="M35 21l1.500 3h-3z" fill="#e12c2c" />
        <text x="35" y="33.500" fontSize="7" textAnchor="middle" fill="#334">
          3D
        </text>
      </>
    ),
  },
  {
    name: 'Photos',
    art: (
      <>
        <circle cx="22" cy="22" r="21.500" fill="#f4f4f4" />
        {petals.map((color, i) => (
          <rect key={color} x="16.500" y="4" width="11" height="17" rx="5.500" fill={color} opacity=".88" transform={`rotate(${i * 45} 22 22)`} />
        ))}
      </>
    ),
  },
  {
    name: 'Messages',
    badge: '23',
    art: (
      <>
        <defs>
          <linearGradient id="messages" x1="0" y1="0" x2="0" y2="1">
            <stop offset="0" stopColor="#5ec4fa" />
            <stop offset="1" stopColor="#1583f4" />
          </linearGradient>
        </defs>
        <path d="M21 3c12 0 21 7 21 17s-9 17-21 17h-4c-2 2-5 4-9 4 2-2 3-4 3-7C5 31 0 26 0 20 0 10 9 3 21 3z" fill="url(#messages)" />
        <path d="M29 20c7 0 13 4.500 13 10.500 0 4-3 7-6 9 0 1 1 2 2 3-3 0-5-1-7-2-9 1-15-4-15-10S22 20 29 20z" fill="#eef3f8" />
        <circle cx="23" cy="31" r="2" fill="#1f5c9e" />
        <circle cx="29" cy="31" r="2" fill="#1f5c9e" />
        <circle cx="35" cy="31" r="2" fill="#1f5c9e" />
      </>
    ),
  },
  {
    name: 'FaceTime',
    art: (
      <>
        <rect x="0" y="4" width="38" height="34" rx="5" fill="#12d85b" />
        <rect x="5" y="13" width="21" height="16" rx="3" fill="#f4f4f4" />
        <path d="M27 19l8-6v16l-8-6z" fill="#f4f4f4" />
        <circle cx="32" cy="30" r="10.500" fill="#f3f3f3" />
        <path d="M27 25c1-2 3-2 4 1-1 2-1 2 2 5 2 2 3 2 4 1 3 1 3 3 1 4-3 2-6 0-8-3-3-3-4-6-3-8z" fill="#16b84e" />
      </>
    ),
  },
  {
    name: 'iTunes',
    running: true,
    art: (
      <>
        <defs>
          <linearGradient id="itunes" x1=".7" y1="0" x2=".3" y2="1">
            <stop offset="0" stopColor="#fb4b5e" />
            <stop offset=".5" stopColor="#c45be0" />
            <stop offset="1" stopColor="#27b8f5" />
          </linearGradient>
        </defs>
        <circle cx="22" cy="22" r="21.500" fill="url(#itunes)" />
        <circle cx="22" cy="22" r="18.800" fill="#fbfafc" />
        <path d="M16 12l16-3v20c0 7-9 6-8 1 1-3 4-3 6-4V16l-12 2v14c0 7-9 6-8 1 1-3 4-3 6-4z" fill="url(#itunes)" />
      </>
    ),
  },
  {
    name: 'System Preferences',
    art: (
      <>
        <defs>
          <linearGradient id="prefs" x1="0" y1="0" x2="0" y2="1">
            <stop offset="0" stopColor="#b7c9d3" />
            <stop offset="1" stopColor="#8c8f91" />
          </linearGradient>
        </defs>
        <rect x="1" y="3" width="42" height="39" rx="2" fill="url(#prefs)" />
        <circle cx="22" cy="22" r="16" fill="none" stroke="#2c2e30" strokeWidth="2.500" strokeDasharray="2 1.300" />
        <circle cx="22" cy="22" r="13.500" fill="#8f9599" stroke="#2c2e30" strokeWidth="3.500" />
        <circle cx="22" cy="22" r="10" fill="#5c6165" />
        <path d="M22 22H34M22 22l-6-10M22 22l-6 10" stroke="#c8ccce" strokeWidth="2.600" />
        <circle cx="22" cy="22" r="3.500" fill="#dcdedf" stroke="#333" />
      </>
    ),
  },
  {
    name: 'iBooks',
    art: (
      <>
        <defs>
          <linearGradient id="ibooks" x1="0" y1="0" x2="0" y2="1">
            <stop offset="0" stopColor="#f9a43c" />
            <stop offset="1" stopColor="#ee5a20" />
          </linearGradient>
        </defs>
        <circle cx="22" cy="22" r="21" fill="url(#ibooks)" stroke="#eadfd6" strokeWidth="1.400" />
        <path d="M21 14c-3-3-9-3-13-1v18c4-2 10-2 13 1zM23 14c3-3 9-3 13-1v18c-4-2-10-2-13 1z" fill="#fbf4ee" />
      </>
    ),
  },
  {
    name: 'App Store',
    badge: '1',
    art: (
      <>
        <defs>
          <linearGradient id="appstore" x1="0" y1="0" x2="0" y2="1">
            <stop offset="0" stopColor="#1fc0fb" />
            <stop offset="1" stopColor="#1668ec" />
          </linearGradient>
        </defs>
        <circle cx="22" cy="22" r="21" fill="url(#appstore)" stroke="#dbe6ee" strokeWidth="1.400" />
        <path d="M19 8l13 24M25 8L12 32" stroke="#f5faff" strokeWidth="3" strokeLinecap="round" />
        <path d="M7 25h30" stroke="#f5faff" strokeWidth="2.600" strokeLinecap="round" />
      </>
    ),
  },
  {
    name: 'Chrome',
    running: true,
    art: (
      <>
        <path d="M22 22L2.900 11A22 22 0 0 1 41.100 11z" fill="#dd4b3e" />
        <path d="M22 0a22 22 0 0 1 19.500 12H22z" fill="#dd4b3e" />
        <path d="M2.700 11.300A22 22 0 0 0 22 44l10-17-19 0z" fill="#1ba261" />
        <path d="M41.300 12A22 22 0 0 1 21.500 44L31 27l-1-15z" fill="#fdcd4f" />
        <circle cx="22" cy="22" r="10" fill="#f1f1f1" />
        <circle cx="22" cy="22" r="8.200" fill="#4a8af4" />
      </>
    ),
  },
  {
    name: 'Word',
    running: true,
    art: (
      <>
        <path d="M22 5h21v34H22z" fill="#f6f6f6" />
        <path d="M26 10h14M26 19h14M26 28h14" stroke="#334" strokeWidth="1.500" />
        <path d="M26 14.500h14M26 23.500h14M26 32.500h14" stroke="#5b86c4" strokeWidth="1.500" />
        <path d="M0 5l25-4v42L0 39z" fill="#2a61ac" />
        <text x="11.500" y="28" fontSize="17" fontWeight="700" textAnchor="middle" fill="#fff" fontFamily="Open Sans, sans-serif">
          W
        </text>
      </>
    ),
  },
  {
    name: 'Excel',
    running: true,
    art: (
      <>
        <path d="M22 5h21v34H22z" fill="#f6f6f6" />
        <path d="M27 11.500h5M34 11.500h6" stroke="#333" strokeWidth="3.500" />
        <path
          d="M27 16.500h5M34 16.500h6M27 21.500h5M34 21.500h6M27 26.500h5M34 26.500h6M27 31.500h5M34 31.500h6"
          stroke="#3fa26c"
          strokeWidth="3.500"
        />
        <path d="M0 5l25-4v42L0 39z" fill="#1d8249" />
        <text x="11.500" y="29" fontSize="19" fontWeight="700" textAnchor="middle" fill="#fff" fontFamily="Open Sans, sans-serif">
          X
        </text>
      </>
    ),
  },
];

const Dock = () => (
  <div className="bg-[linear-gradient(90deg,#11180f,#20281c_3%,#1a2018_50%,#131a14_96%,#1c2a1f)] px-[43px] pt-0.5">
    <div className="flex h-[65px] rounded-t-md bg-gradient-to-r from-[#62645d] via-[#565b56] to-[#5e605a] pl-1">
      <ul className="grid flex-1 grid-cols-20">
        {dockApps.map((app) => (
          <li key={app.name} className="flex flex-col items-center pt-2">
            <button aria-label={app.name} className="relative h-11 w-11">
              <svg width="44" height="44" viewBox="0 0 44 44" className="overflow-visible">
                {app.art}
              </svg>
              {app.badge && <Badge>{app.badge}</Badge>}
            </button>
            {app.running && <span className="mt-[7px] h-1 w-1 rounded-full bg-black" />}
          </li>
        ))}
      </ul>
      <div className="flex gap-2 pl-3 pr-2 pt-2">
        <span className="h-[47px] w-px bg-[#2e302d]" />
        <button aria-label="Document" className="h-11 w-[52px]">
          <svg width="44" height="46" viewBox="0 0 44 46" className="mx-auto">
            <path d="M11 1h20l11 14v30H11z" fill="#f7f7f7" />
            <path d="M13 3h16M13 5h15" stroke="#4fb554" strokeWidth="1.500" />
            <path d="M14 10h16M14 14h16M14 18h25M14 22h25M14 26h25M14 30h25M14 34h25M14 38h25" stroke="#9a9a9a" />
            <path d="M31 1c1 6 0 9-2 12 4-1 9 0 13 2z" fill="#dadada" stroke="#999" strokeWidth=".6" />
            <path d="M5 20l15-2v22L5 38z" fill="#2a5ca6" />
            <text x="12.500" y="33" fontSize="11" fontWeight="700" textAnchor="middle" fill="#fff">
              W
            </text>
          </svg>
        </button>
        <button aria-label="Trash" className="h-11 w-11">
          <svg width="44" height="46" viewBox="0 0 44 46">
            <path d="M4 5l6 37c4 4 18 4 22 0l6-37z" fill="#dcdddc" />
            <path d="M8 12l8 28M18 10l-3 22M26 12l4 26M33 10l-7 30M10 24l20-6M12 34l18-8" stroke="#ececec" strokeWidth="2" />
            <ellipse cx="21" cy="6" rx="17" ry="4.500" fill="#5c605d" stroke="#ececec" strokeWidth="1.500" />
            <path d="M8 7l6-5 5 4 4-5 5 5 5-3 2 4-9 3H14z" fill="#eee" />
            <path d="M13 5l3 3M28 4l3 3" stroke="#3d9b4a" strokeWidth="1.800" />
            <path d="M20 7l3-3M24 8l3-1" stroke="#c33" strokeWidth="1.500" />
            <path d="M17 4l2 3M31 8l3-3" stroke="#223" strokeWidth="1.800" />
          </svg>
        </button>
      </div>
    </div>
  </div>
);

const App: React.FC = () => {
  return (
    <div className="min-h-screen overflow-hidden bg-[#161d15] font-['Inter','Liberation_Sans',sans-serif]">
      <MenuBar />
      <main className="border-t border-[#7d8580]">
        <TitleBar />
        <Ribbon />
        <FormulaBar />
        <Sheet />
        <SheetTabs />
        <StatusBar />
      </main>
      <Dock />
    </div>
  );
};

export default App;
